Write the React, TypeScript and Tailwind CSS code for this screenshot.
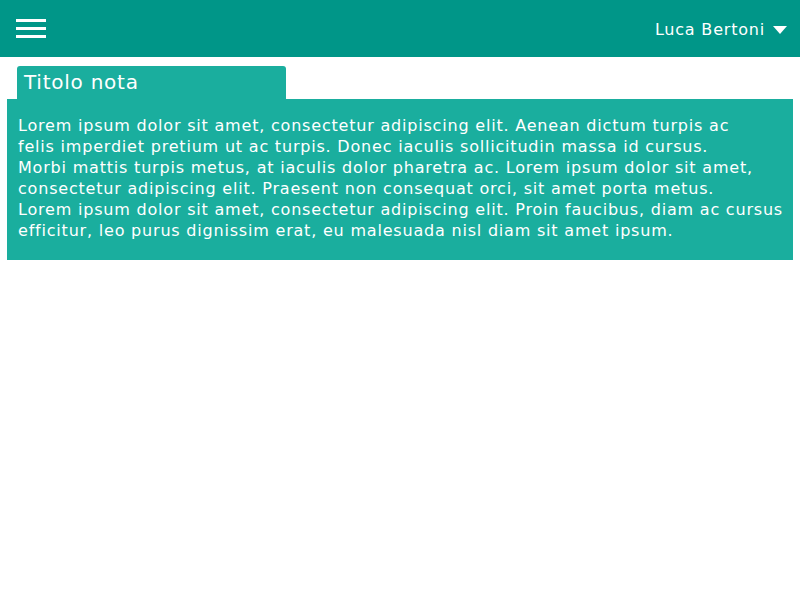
const lines = [
  'Lorem ipsum dolor sit amet, consectetur adipiscing elit. Aenean dictum turpis ac',
  'felis imperdiet pretium ut ac turpis. Donec iaculis sollicitudin massa id cursus.',
  'Morbi mattis turpis metus, at iaculis dolor pharetra ac. Lorem ipsum dolor sit amet,',
  'consectetur adipiscing elit. Praesent non consequat orci, sit amet porta metus.',
  'Lorem ipsum dolor sit amet, consectetur adipiscing elit. Proin faucibus, diam ac cursus',
  'efficitur, leo purus dignissim erat, eu malesuada nisl diam sit amet ipsum.',
];

function Header() {
  return (
    <header className="h-[57px] bg-[#009688] flex items-center justify-between pl-4 pr-[13px] text-white">
      <button className="flex flex-col gap-[5px] w-[30px]">
        <span className="h-[3px] bg-white block" />
        <span className="h-[3px] bg-white block" />
        <span className="h-[3px] bg-white block" />
      </button>
      <div className="flex items-center gap-2 text-[16px] tracking-[0.8px] pt-[3px]">
        <span>Luca Bertoni</span>
        <svg width="14" height="8" viewBox="0 0 14 8">
          <path d="M0 0 L14 0 L7 8 Z" fill="white" />
        </svg>
      </div>
    </header>
  );
}

export default function App() {
  return (
    <div className="w-[800px] h-[600px] bg-white" style={{ fontFamily: '"DejaVu Sans", sans-serif' }}>
      <Header />
      <main className="px-[7px] pt-[9px]">
        <div className="ml-[10px] w-[269px] h-[33px] bg-[#1aae9e] rounded-t-[3px] text-white text-[20px] tracking-[0.75px] pl-[7px] leading-[33px]">
          Titolo nota
        </div>
        <div className="bg-[#1aae9e] text-white text-[16px] tracking-[0.8px] leading-[21px] pl-[11px] pr-2 pt-[16px] pb-[19px]">
          {lines.map((l) => (
            <div key={l} className="whitespace-nowrap">{l}</div>
          ))}
        </div>
      </main>
    </div>
  );
}
